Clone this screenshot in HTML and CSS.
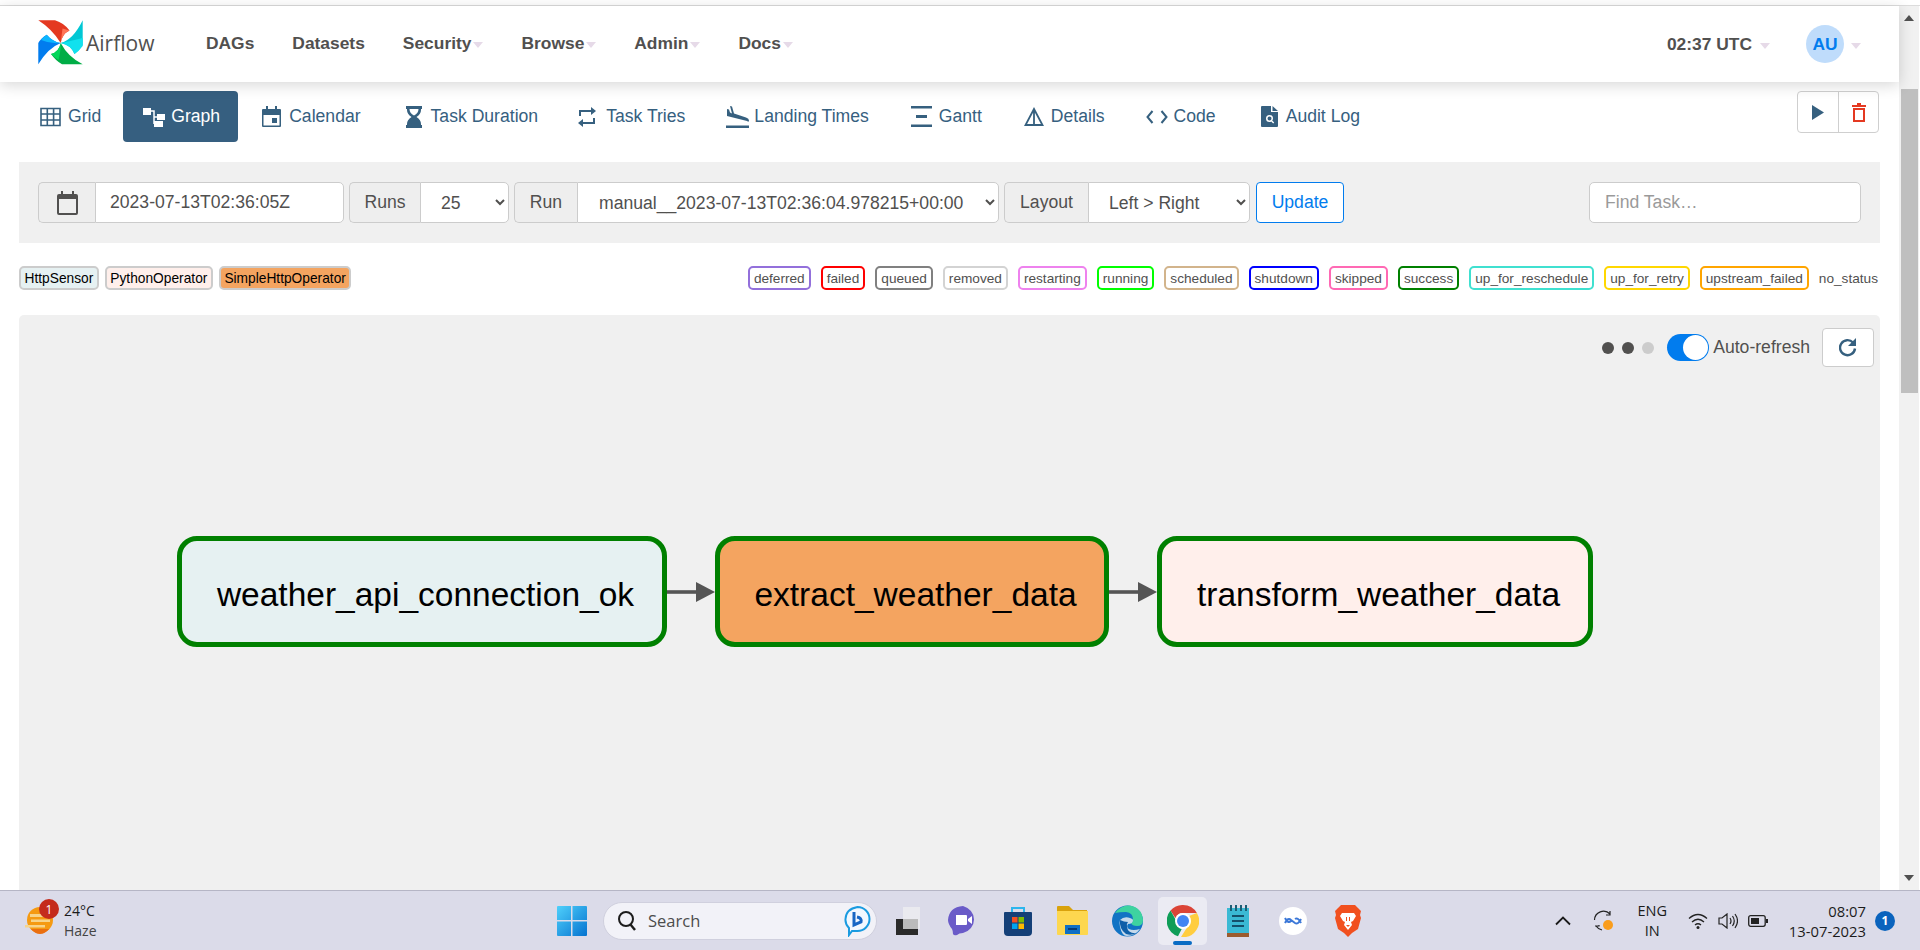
FILE: index.html
```html
<!DOCTYPE html>
<html lang="en">
<head>
<meta charset="utf-8">
<title>Airflow - Graph</title>
<link rel="stylesheet" href="styles.css">
</head>
<body>
<div class="window">
  <div class="page">
    <header class="navbar">
      <div class="brand">
        <svg class="logo" viewBox="0 0 46 46" width="46" height="46">
          <path fill="#e43921" d="M.3.300H17Q26 3 31.500 10.500Q24 14 22.700 23Q14 9 .3.300Z"/>
          <path fill="#ff7557" d="M22.700 23L24.500 8.500 31.500 10.500Q24 14 22.700 23Z"/>
          <path fill="#00c7d4" d="M44.700.300V25Q41 31 36.500 34Q33 25 22.700 23Q35 20 44.700.300Z"/>
          <path fill="#11e1ee" d="M22.700 23Q33 21 44.700 18V26Q41 31 36.500 34Q33 25 22.700 23Z"/>
          <path fill="#00ad46" d="M44.700 44.300H24Q18 41 13 34Q21 32 22.700 23Q30 37 44.700 44.300Z"/>
          <path fill="#04d659" d="M13 34Q21 32 22.700 23Q23 30 20.500 40Q16 37 13 34Z"/>
          <path fill="#017cee" d="M.3 44.300V23Q3 18 8.700 14.700Q15 22 22.700 23Q10 28 .3 44.300Z"/>
          <path fill="#0cb6ff" d="M8.700 14.700Q15 22 22.700 23Q12 24 3 20Q5 17 8.700 14.700Z"/>
        </svg>
        <span class="brand-name">Airflow</span>
      </div>
      <nav class="menu">
        <a class="menu-item">DAGs</a>
        <a class="menu-item">Datasets</a>
        <a class="menu-item">Security<i class="caret"></i></a>
        <a class="menu-item">Browse<i class="caret"></i></a>
        <a class="menu-item">Admin<i class="caret"></i></a>
        <a class="menu-item">Docs<i class="caret"></i></a>
      </nav>
      <div class="nav-right">
        <span class="clock">02:37 UTC<i class="caret caret-clock"></i></span>
        <span class="avatar">AU</span><i class="caret caret-user"></i>
      </div>
    </header>

    <div class="tabs-row">
      <a class="tab tab-grid">
        <svg class="ic" width="21" height="20" viewBox="0 0 21 20"><path fill="none" stroke="currentColor" stroke-width="1.600" d="M1 1.500h19v17H1zM1 7h19M1 13h19M7.300 1.500v17M13.600 1.500v17"/></svg>Grid</a>
      <a class="tab tab-active">
        <svg class="ic" width="22" height="20" viewBox="0 0 22 20"><path fill="currentColor" d="M0 1h8v7H0zM14 7h8v6h-8zM11 14h9v6h-9z"/><path fill="none" stroke="currentColor" stroke-width="1.500" d="M8 4h3v13M11 10h3"/></svg>Graph</a>
      <a class="tab tab-cal">
        <svg class="ic" width="19" height="21" viewBox="0 0 19 21"><path fill="currentColor" d="M1 3h3V0h2v3h7V0h2v3h3q1 0 1 1v16q0 1-1 1H1q-1 0-1-1V4q0-1 1-1zm.500 6v10.500h16V9zM10 12h5v5h-5z"/></svg>Calendar</a>
      <a class="tab tab-dur">
        <svg class="ic" width="16" height="22" viewBox="0 0 16 22"><path fill="currentColor" d="M0 0h16v3h-1v1q0 4-4.500 7Q15 14 15 18v1h1v3H0v-3h1v-1q0-4 4.500-7Q1 8 1 4V3H0zM3.500 3q0 4 4.500 6.500Q12.500 7 12.500 3z"/></svg>Task Duration</a>
      <a class="tab tab-tries">
        <svg class="ic" width="18" height="20" viewBox="0 0 18 20"><path fill="none" stroke="currentColor" stroke-width="2" d="M2 9V4h13M16 11v5H3"/><path fill="currentColor" d="M13 0l5 4-5 4zM5 12l-5 4 5 4z"/></svg>Task Tries</a>
      <a class="tab tab-land">
        <svg class="ic" width="23" height="22" viewBox="0 0 23 22"><path fill="currentColor" d="M0 19.500h23V22H0zM4 0l2 .5 2 7 6 2 6 2q3 1 3 3t-2 .500L1 10V3l2 .5 1 3 2 1z"/></svg>Landing Times</a>
      <a class="tab">
        <svg class="ic" width="21" height="21" viewBox="0 0 21 21"><path fill="currentColor" d="M0 0h21v2.500H0zM5 9h11v3H5zM0 18.500h21V21H0z"/></svg>Gantt</a>
      <a class="tab">
        <svg class="ic" width="20" height="19" viewBox="0 0 20 19"><path fill="none" stroke="currentColor" stroke-width="1.800" d="M10 2L1.500 18h17zM10 2v16"/></svg>Details</a>
      <a class="tab tab-code">
        <svg class="ic" width="22" height="14" viewBox="0 0 22 14"><path fill="none" stroke="currentColor" stroke-width="2" d="M6.500 1L1.500 7l5 6M15.500 1l5 6-5 6"/></svg>Code</a>
      <a class="tab tab-audit">
        <svg class="ic" width="17" height="21" viewBox="0 0 17 21"><path fill="currentColor" fill-rule="evenodd" d="M1 0h9v6h7v14q0 1-1 1H1q-1 0-1-1V1q0-1 1-1zm10.500 0L17 5h-5.500zM8.500 9a3.500 3.500 0 0 0 0 7q1 0 1.700-.5l2 2 1-1-2-2q.8-1 .8-2A3.500 3.500 0 0 0 8.500 9zm0 1.500a2 2 0 1 1 0 4 2 2 0 0 1 0-4z"/></svg>Audit Log</a>
      <div class="dag-actions">
        <span class="dag-btn">
          <svg width="12" height="15" viewBox="0 0 12 15"><path fill="#36607f" d="M0 0l12 7.500L0 15z"/></svg>
        </span>
        <span class="dag-btn dag-btn-last">
          <svg width="14" height="19" viewBox="0 0 14 19"><path fill="#e43921" d="M5 0h4v2h5v2H0V2h5zM1 5h12v14H1zm2 2v10h8V7z"/></svg>
        </span>
      </div>
    </div>

    <form class="controls">
      <div class="group">
        <span class="addon addon-cal">
          <svg width="21" height="24" viewBox="0 0 21 24"><path fill="#51504f" d="M4 0h2v3h9V0h2v3h2q2 0 2 2v17q0 2-2 2H2q-2 0-2-2V5q0-2 2-2h2zM2 8v14h17V8z"/></svg>
        </span>
        <input class="field field-date" type="text" value="2023-07-13T02:36:05Z">
      </div>
      <div class="group">
        <span class="addon addon-runs">Runs</span>
        <select class="field select-runs"><option>25</option></select>
      </div>
      <div class="group">
        <span class="addon addon-run">Run</span>
        <select class="field select-run"><option>manual__2023-07-13T02:36:04.978215+00:00</option></select>
      </div>
      <div class="group">
        <span class="addon addon-layout">Layout</span>
        <select class="field select-layout"><option>Left &gt; Right</option></select>
      </div>
      <button class="update" type="button">Update</button>
      <input class="find" type="text" placeholder="Find Task…">
    </form>

    <div class="legend-row">
      <div class="legend">
        <span class="op op-sensor">HttpSensor</span>
        <span class="op op-python">PythonOperator</span>
        <span class="op op-simple">SimpleHttpOperator</span>
      </div>
      <div class="legend">
        <span class="st st-deferred">deferred</span>
        <span class="st st-failed">failed</span>
        <span class="st st-queued">queued</span>
        <span class="st st-removed">removed</span>
        <span class="st st-restarting">restarting</span>
        <span class="st st-running">running</span>
        <span class="st st-scheduled">scheduled</span>
        <span class="st st-shutdown">shutdown</span>
        <span class="st st-skipped">skipped</span>
        <span class="st st-success">success</span>
        <span class="st st-reschedule">up_for_reschedule</span>
        <span class="st st-retry">up_for_retry</span>
        <span class="st st-upstream">upstream_failed</span>
        <span class="st st-none">no_status</span>
      </div>
    </div>

    <section class="graph">
      <div class="graph-tools">
        <span class="dot"></span><span class="dot"></span><span class="dot dot-off"></span>
        <span class="toggle"><i class="knob"></i></span>
        <span class="auto-label">Auto-refresh</span>
        <span class="refresh">
          <svg width="18" height="19" viewBox="0 0 18 19"><path fill="none" stroke="#36607f" stroke-width="2.400" d="M14 4.500A7.500 7.500 0 1 0 16 10.500"/><path fill="#36607f" d="M17 0v8h-8z"/></svg>
        </span>
      </div>
      <div class="dag">
        <div class="node node-a">weather_api_connection_ok</div>
        <svg class="edge" width="48" height="30" viewBox="0 0 48 30"><path stroke="#555" stroke-width="3.600" d="M0 15h32"/><path fill="#555" d="M29 5l19 10-19 10z"/></svg>
        <div class="node node-b">extract_weather_data</div>
        <svg class="edge" width="48" height="30" viewBox="0 0 48 30"><path stroke="#555" stroke-width="3.600" d="M0 15h32"/><path fill="#555" d="M29 5l19 10-19 10z"/></svg>
        <div class="node node-c">transform_weather_data</div>
      </div>
    </section>
  </div>
  <div class="scrollbar">
    <svg class="sb-arrow" width="10" height="6" viewBox="0 0 10 6"><path fill="#505050" d="M5 0l5 6H0z"/></svg>
    <div class="sb-thumb"></div>
    <svg class="sb-arrow sb-down" width="10" height="6" viewBox="0 0 10 6"><path fill="#505050" d="M0 0h10L5 6z"/></svg>
  </div>
</div>

<footer class="taskbar">
  <div class="tb-left">
    <span class="weather">
      <svg width="28" height="27" viewBox="0 0 28 27">
        <circle cx="15" cy="13" r="13" fill="#f59a12"/>
        <path fill="#f7d48a" d="M5 7h14v3H5zM0 18h20v2.500H0zM6 12.500h19v2.500H6z"/>
        <path fill="#ea6f10" d="M6 22h18q-4 5-9 5t-9-5z"/>
      </svg>
      <b class="wbadge">1</b>
    </span>
    <span class="wtext"><span class="wtemp">24°C</span><span class="wdesc">Haze</span></span>
  </div>

  <svg class="win" width="30" height="30" viewBox="0 0 30 30">
    <defs><linearGradient id="wg" x1="0" y1="0" x2="1" y2="1"><stop offset="0" stop-color="#4fd0fb"/><stop offset="1" stop-color="#0573d0"/></linearGradient></defs>
    <path fill="url(#wg)" d="M1 0h13v14H0V1q0-1 1-1zM15.500 0H29q1 0 1 1v13H15.500zM0 15.500h14V30H1q-1 0-1-1zM15.500 15.500H30V29q0 1-1 1H15.500z"/>
  </svg>

  <div class="search">
    <svg width="20" height="22" viewBox="0 0 20 22"><circle cx="9" cy="9" r="7" fill="none" stroke="#1d1d1d" stroke-width="2"/><path stroke="#1d1d1d" stroke-width="2.400" d="M13.500 14.500L18 20"/></svg>
    <span class="search-text">Search</span>
    <svg class="bing" width="27" height="32" viewBox="0 0 27 32">
      <path fill="#f2f8ff" stroke="#1a9be0" stroke-width="2" d="M13.500 2a12 12 0 0 1 0 24H8l-3 4v-7Q1 19 1.500 14 2 4 13.500 2z"/>
      <path fill="none" stroke="#1866c4" stroke-width="3" d="M10 7v13l7-3q1-4-4-5"/>
    </svg>
  </div>

  <div class="slots">
    <span class="slot">
      <svg width="24" height="28" viewBox="0 0 24 28"><rect x="0" y="12" width="22" height="16" fill="#2a2a2a"/><rect x="7" y="0" width="17" height="22" fill="#ececf0" opacity=".85"/><rect x="7" y="12" width="15" height="10" fill="#bbb"/></svg>
    </span>
    <span class="slot">
      <svg width="30" height="30" viewBox="0 0 30 30"><path fill="#6a5bc8" d="M15 0a15 14 0 0 1 0 27q-4 0-6 2-3 1-4-1 0-3-1-5Q0 18 0 14 1 1 15 0z"/><path fill="#fff" d="M8 9h10q1 0 1 1v8q0 1-1 1H8zM20 13l4-3v8l-4-3z"/></svg>
    </span>
    <span class="slot">
      <svg width="30" height="30" viewBox="0 0 30 30"><path fill="none" stroke="#2db6ee" stroke-width="2" d="M9 7V2h12v5"/><path fill="#143f77" d="M2 6h26q1 0 1 1v19q0 4-4 4H5q-4 0-4-4V7q0-1 1-1z"/><path fill="#f25022" d="M9 11h5.500v5.500H9z"/><path fill="#7fba00" d="M15.500 11H21v5.500h-5.500z"/><path fill="#00a4ef" d="M9 17.500h5.500V23H9z"/><path fill="#ffb900" d="M15.500 17.500H21V23h-5.500z"/></svg>
    </span>
    <span class="slot">
      <svg width="31" height="29" viewBox="0 0 31 29"><path fill="#d9a20c" d="M1 0h11l4 4h14v8H0V1q0-1 1-1z"/><path fill="#fdd74f" d="M0 5h31v23q0 1-1 1H1q-1 0-1-1z"/><path fill="#0f6fc4" d="M8 19h15v9H8z"/><path fill="#043b78" d="M11 22h9v2h-9z"/></svg>
    </span>
    <span class="slot">
      <svg width="31" height="32" viewBox="0 0 31 32">
        <circle cx="15.500" cy="16" r="15.500" fill="#1173c4"/>
        <path fill="#3ed3a0" d="M3 8Q9 0 17 .5 30 2 31 15q0 6-6 6-5 0-6-3 2-1 2-4 0-6-7-7Q7 7 3 8z"/>
        <path fill="#d9e4ef" d="M8 15q4-4 10-2 3 1 3 2 0 4-5 4-2 3 1 5 4 2 11 0-5 7-13 7Q10 31 8 22q-1-4 0-7z" opacity=".9"/>
        <path fill="#0f5fa8" d="M8 15q-1 9 6 14 5 2 11-1-9 1-10-6-1-3 1-5-4 0-8-2z"/>
      </svg>
    </span>
    <span class="slot slot-active">
      <svg width="32" height="32" viewBox="0 0 32 32">
        <path fill="#db4437" d="M16 0a16 16 0 0 1 13.860 8H16a8 8 0 0 0-7.500 5.200L3.500 5.600A16 16 0 0 1 16 0z"/>
        <path fill="#0f9d58" d="M3.500 5.600L9.700 16.500a8 8 0 0 0 5 7.400L11 31.200A16 16 0 0 1 3.500 5.600z"/>
        <path fill="#ffcd40" d="M29.860 8A16 16 0 0 1 14 32l6-9.500A8 8 0 0 0 22 11z"/>
        <circle cx="16" cy="16" r="8" fill="#fff"/><circle cx="16" cy="16" r="6" fill="#4285f4"/>
      </svg>
      <i class="active-bar"></i>
    </span>
    <span class="slot">
      <svg width="22" height="32" viewBox="0 0 22 32"><path fill="#3ab9d4" d="M0 3h22v25H0z"/><path fill="#1a5e75" d="M3 0h2v6H3zM8 0h2v6H8zM13 0h2v6h-2zM18 0h2v6h-2z"/><path fill="#14506a" d="M5 10h12v2H5zM5 15h12v2H5zM5 20h12v2H5z"/><path fill="#9b5b2e" d="M0 28h22v4H0z"/></svg>
    </span>
    <span class="slot">
      <svg width="28" height="28" viewBox="0 0 28 28"><circle cx="14" cy="14" r="14" fill="#fff"/><path fill="none" stroke="#3c78d8" stroke-width="2" d="M6 16q3-6 6-3l4 3q3 2 6-4M6 11q3 6 6 3M16 12q3-2 6 4"/></svg>
    </span>
    <span class="slot">
      <svg width="26" height="32" viewBox="0 0 26 32"><path fill="#f1501f" d="M6 0h14l3 3 3 3-1 4 1 3-3 11-6 4-4 4-4-4-6-4L0 13l1-3-1-4 3-3z"/><path fill="#fff" d="M7 8h12l2 3-3 5-2 1 1 3-4 5-4-5 1-3-2-1-3-5z"/><path fill="#f1501f" d="M11 12h1v4h-1zM14 12h1v4h-1zM11 20h4l-2 2z"/></svg>
    </span>
  </div>

  <div class="tray">
    <svg class="tray-chev" width="16" height="10" viewBox="0 0 16 10"><path fill="none" stroke="#1a1a1a" stroke-width="1.800" d="M1 8.500l7-7 7 7"/></svg>
    <svg class="tray-sync" width="21" height="21" viewBox="0 0 21 21"><path fill="none" stroke="#222" stroke-width="1.200" d="M1.500 10A9 9 0 0 1 17 4M17 1v4h-4M2 16h4v-1M3 16q2 3 6 4"/><circle cx="15" cy="15" r="5" fill="#f99d1c"/></svg>
    <span class="lang"><span>ENG</span><span>IN</span></span>
    <svg class="tray-wifi" width="20" height="16" viewBox="0 0 20 16"><path fill="none" stroke="#222" stroke-width="1.300" d="M1 5.500q9-8 18 0M4 9q6-5.500 12 0M7 12q3-2.500 6 0"/><circle cx="10" cy="14.500" r="1.500" fill="#222"/></svg>
    <svg class="tray-vol" width="20" height="16" viewBox="0 0 20 16"><path fill="none" stroke="#222" stroke-width="1.200" d="M1 5h3l5-4v14l-5-4H1zM12 5q2 3 0 6M14.500 3q3.500 5 0 10M17 1q5 7 0 14"/></svg>
    <svg class="tray-bat" width="20" height="12" viewBox="0 0 20 12"><rect x=".7" y=".7" width="16.500" height="10.600" rx="2" fill="none" stroke="#222" stroke-width="1.300"/><rect x="3" y="3" width="8" height="6" fill="#222"/><path fill="#222" d="M18 4h2v4h-2z"/></svg>
    <span class="datetime"><span>08:07</span><span>13-07-2023</span></span>
    <span class="notif">1</span>
  </div>
</footer>
</body>
</html>
```

FILE: styles.css
```css
* { box-sizing: border-box; }
html, body { margin: 0; height: 100%; }
body {
  height: 950px;
  overflow: hidden;
  display: flex;
  flex-direction: column;
  background: #fff;
  font-family: "Liberation Sans", Arial, sans-serif;
  color: #51504f;
  padding-top: 5px;
}
.window {
  flex: 1;
  min-height: 0;
  display: flex;
  border-top: 1px solid #dcdcdc;
}
.page {
  flex: 1;
  min-width: 0;
  display: flex;
  flex-direction: column;
}

/* navbar */
.navbar {
  height: 76px;
  flex: none;
  display: flex;
  align-items: center;
  background: #fff;
  box-shadow: 0 3px 14px rgba(0,0,0,.16);
  position: relative;
  padding-left: 38px;
}
.brand { display: flex; align-items: center; width: 168px; flex: none; }
.logo { flex: none; margin-top: -2px; }
.brand-name {
  font-family: "Open Sans", sans-serif;
  font-size: 21px;
  margin: -3px 0 0 2px;
  color: #51504f;
}
.menu { display: flex; gap: 38px; padding-bottom: 2px; }
.menu-item {
  font-size: 17.4px;
  font-weight: 700;
  color: #51504f;
  display: flex;
  align-items: center;
}
.caret {
  display: inline-block;
  width: 0; height: 0;
  margin: 3px 0 0 2px;
  border-left: 5px solid transparent;
  border-right: 5px solid transparent;
  border-top: 6px solid #e6dae8;
}
.nav-right {
  margin-left: auto;
  display: flex;
  align-items: center;
  padding-right: 38px;
}
.clock { font-size: 17.4px; font-weight: 700; display: flex; align-items: center; }
.caret-clock { margin-left: 8px; }
.avatar {
  width: 38px; height: 38px;
  border-radius: 50%;
  background: #bfdcfb;
  color: #017cee;
  font-size: 17.4px;
  font-weight: 700;
  display: flex;
  align-items: center;
  justify-content: center;
  margin-left: 36px;
}
.caret-user { margin-left: 7px; }

/* tabs */
.tabs-row {
  flex: none;
  height: 51px;
  margin: 9px 19px 0 19px;
  display: flex;
  align-items: center;
}
.tab {
  height: 51px;
  display: flex;
  align-items: center;
  gap: 7px;
  padding: 0 21px;
  font-size: 17.6px;
  color: #36607f;
  border-radius: 4px;
}
.tab-grid { padding-right: 22px; }
.tab-active { background: #365f80; color: #fff; padding: 0 18px 0 20px; gap: 6px; }
.tab-cal { padding-left: 24px; gap: 8px; }
.tab-dur { padding-left: 24px; gap: 9px; }
.tab-tries { padding-left: 19px; gap: 10px; }
.tab-land { padding-left: 20px; gap: 5px; }
.tab-code { padding-left: 20px; gap: 6px; }
.tab-audit { padding-left: 24px; gap: 8px; }
.ic { flex: none; display: block; }
.dag-actions {
  margin-left: auto;
  margin-right: 1px;
  align-self: flex-start;
  display: flex;
  height: 42px;
  border: 1px solid #cfcfcf;
  border-radius: 4px;
  background: #fff;
}
.dag-btn {
  width: 40px;
  display: flex;
  align-items: center;
  justify-content: center;
}
.dag-btn-last { border-left: 1px solid #cfcfcf; }

/* form */
.controls {
  flex: none;
  margin: 20px 19px 0 19px;
  height: 81px;
  background: #f0f0f0;
  padding: 0 19px 0 19px;
  display: flex;
  align-items: center;
  gap: 5px;
}
.group { display: flex; height: 41px; }
.addon {
  display: flex;
  align-items: center;
  justify-content: center;
  background: #eee;
  border: 1px solid #ccc;
  border-right: 0;
  border-radius: 5px 0 0 5px;
  font-size: 17.6px;
  color: #51504f;
  flex: none;
}
.addon-cal { width: 57px; }
.addon-runs { width: 71px; }
.addon-run { width: 63px; }
.addon-layout { width: 84px; }
.field {
  height: 41px;
  border: 1px solid #ccc;
  border-radius: 0 5px 5px 0;
  background: #fff;
  font-family: inherit;
  font-size: 17.6px;
  color: #51504f;
  padding: 0 14px;
}
.field-date { width: 249px; }
.select-runs { width: 89px; padding-left: 16px; }
.select-run { width: 422px; padding-left: 17px; }
.select-layout { width: 162px; padding-left: 16px; }
.update {
  width: 88px;
  height: 41px;
  border: 1px solid #017cee;
  border-radius: 4px;
  background: #fff;
  color: #017cee;
  font-family: inherit;
  font-size: 17.6px;
  padding: 0;
  margin-left: 1px;
}
.find {
  margin-left: auto;
  width: 272px;
  height: 41px;
  border: 1px solid #ccc;
  border-radius: 5px;
  background: #fff;
  font-family: inherit;
  font-size: 17.6px;
  padding: 0 15px;
}
.find::placeholder { color: #9a9a9a; }

/* legend */
.legend-row {
  flex: none;
  margin: 23px 19px 0 19px;
  height: 24px;
  display: flex;
  justify-content: space-between;
}
.legend { display: flex; gap: 6px; }
.legend + .legend { gap: 10px; }
.op, .st {
  height: 24px;
  display: flex;
  align-items: center;
  border-radius: 5px;
  font-size: 13.75px;
  color: #000;
  border: 2px solid #ccc;
  padding: 0 3.5px;
}
.st { color: #51504f; font-size: 13.65px; padding: 0 4px; }
.op-sensor { background: #e6f1f2; }
.op-python { background: #ffefeb; }
.op-simple { background: #f4a460; }
.st-deferred { border-color: #9370db; }
.st-failed { border-color: #f00; }
.st-queued { border-color: #808080; }
.st-removed { border-color: #d3d3d3; }
.st-restarting { border-color: #ee82ee; }
.st-running { border-color: #0f0; }
.st-scheduled { border-color: #d2b48c; }
.st-shutdown { border-color: #00f; }
.st-skipped { border-color: #ff69b4; }
.st-success { border-color: #008000; }
.st-reschedule { border-color: #40e0d0; }
.st-retry { border-color: #ffd700; }
.st-upstream { border-color: #ffa500; }
.st-none { border-color: transparent; border-left: 0; padding: 0; }

/* graph */
.graph {
  flex: 1;
  min-height: 0;
  margin: 25px 19px 0 19px;
  background: #f0f0f0;
  border-radius: 5px 5px 0 0;
  overflow: hidden;
  display: flex;
  flex-direction: column;
}
.graph-tools {
  flex: none;
  display: flex;
  align-items: center;
  justify-content: flex-end;
  padding: 13px 6px 0 0;
  height: 52px;
}
.dot {
  width: 12px; height: 12px;
  border-radius: 50%;
  background: #51504f;
  margin-right: 8px;
}
.dot-off { background: #ccc; margin-right: 13px; }
.toggle {
  width: 42px; height: 27px;
  border-radius: 14px;
  background: #017cee;
  display: flex;
  align-items: center;
  justify-content: flex-end;
  padding-right: 1px;
}
.knob { width: 25px; height: 25px; border-radius: 50%; background: #fff; display: block; }
.auto-label { font-size: 17.6px; margin-left: 4px; color: #51504f; }
.refresh {
  width: 52px; height: 39px;
  margin-left: 12px;
  border: 1px solid #ccc;
  border-radius: 4px;
  background: #fff;
  display: flex;
  align-items: center;
  justify-content: center;
}
.dag {
  flex: none;
  margin: 169px 0 0 158px;
  display: flex;
  align-items: center;
}
.node {
  flex: none;
  height: 111px;
  border: 5px solid #008000;
  border-radius: 20px;
  display: flex;
  align-items: center;
  justify-content: center;
  padding: 7px 0 0 7px;
  font-size: 33.5px;
  color: #000;
}
.node-a { width: 490px; background: #e6f1f2; }
.node-b { width: 394px; background: #f4a460; }
.node-c { width: 436px; background: #ffefeb; }
.edge { flex: none; }

/* scrollbar */
.scrollbar {
  flex: none;
  width: 21px;
  border-right: 1px solid #fff;
  background: #f1f1f1;
  display: flex;
  flex-direction: column;
  align-items: center;
  padding: 9px 0 9px;
}
.sb-arrow { flex: none; }
.sb-thumb {
  flex: none;
  width: 17px;
  height: 304px;
  margin-top: 68px;
  background: #bfbfbf;
}
.sb-down { margin-top: auto; }

/* taskbar */
.taskbar {
  flex: none;
  height: 60px;
  background: #dbdbe9;
  border-top: 1px solid #b5b5c5;
  display: flex;
  align-items: center;
  font-family: "Open Sans", "Noto Sans", sans-serif;
  color: #1b1b1b;
}
.tb-left {
  flex: none;
  width: 557px;
  padding-left: 25px;
  display: flex;
  align-items: center;
}
.weather { position: relative; display: block; width: 28px; height: 27px; }
.weather svg { display: block; }
.wbadge {
  position: absolute;
  left: 14px; top: -8px;
  width: 20px; height: 20px;
  border-radius: 50%;
  background: #c42b1c;
  color: #fff;
  font-size: 12px;
  font-weight: 400;
  display: flex;
  align-items: center;
  justify-content: center;
}
.wtext { display: flex; flex-direction: column; margin-left: 11px; font-size: 14px; line-height: 20px; }
.wdesc { color: #444; }
.win { flex: none; }
.search {
  flex: none;
  width: 274px;
  height: 38px;
  margin-left: 16px;
  border-radius: 19px;
  background: #f2f2f8;
  border: 1px solid #d0d0de;
  display: flex;
  align-items: center;
  padding: 0 5px 0 13px;
}
.search-text { font-size: 16.5px; color: #4c4c4c; margin-left: 11px; }
.bing { margin-left: auto; }
.slots { flex: none; margin-left: 3px; display: flex; }
.slot {
  width: 55px;
  height: 48px;
  display: flex;
  align-items: center;
  justify-content: center;
  position: relative;
}
.slot-active { background: #ebebf3; border-radius: 5px; width: 49px; margin: 0 3px; }
.active-bar {
  position: absolute;
  left: 15px; bottom: 0;
  width: 19px; height: 4px;
  border-radius: 2px;
  background: #0a6cc4;
}
.tray {
  flex: none;
  margin-left: auto;
  padding-right: 25px;
  display: flex;
  align-items: center;
}
.tray-chev { margin-right: 22px; }
.tray-sync { margin-right: 23px; }
.lang, .datetime {
  display: flex;
  flex-direction: column;
  line-height: 20px;
  align-items: center;
}
.lang { margin-right: 21px; font-size: 14.5px; }
.tray-wifi { margin-right: 10px; }
.tray-vol { margin-right: 10px; }
.tray-bat { margin-right: 20px; }
.datetime { align-items: flex-end; width: 78px; font-size: 14.8px; }
.notif {
  width: 20px; height: 20px;
  margin-left: 9px;
  border-radius: 50%;
  background: #0a63bd;
  color: #fff;
  font-size: 12px;
  font-weight: 700;
  display: flex;
  align-items: center;
  justify-content: center;
}
```
